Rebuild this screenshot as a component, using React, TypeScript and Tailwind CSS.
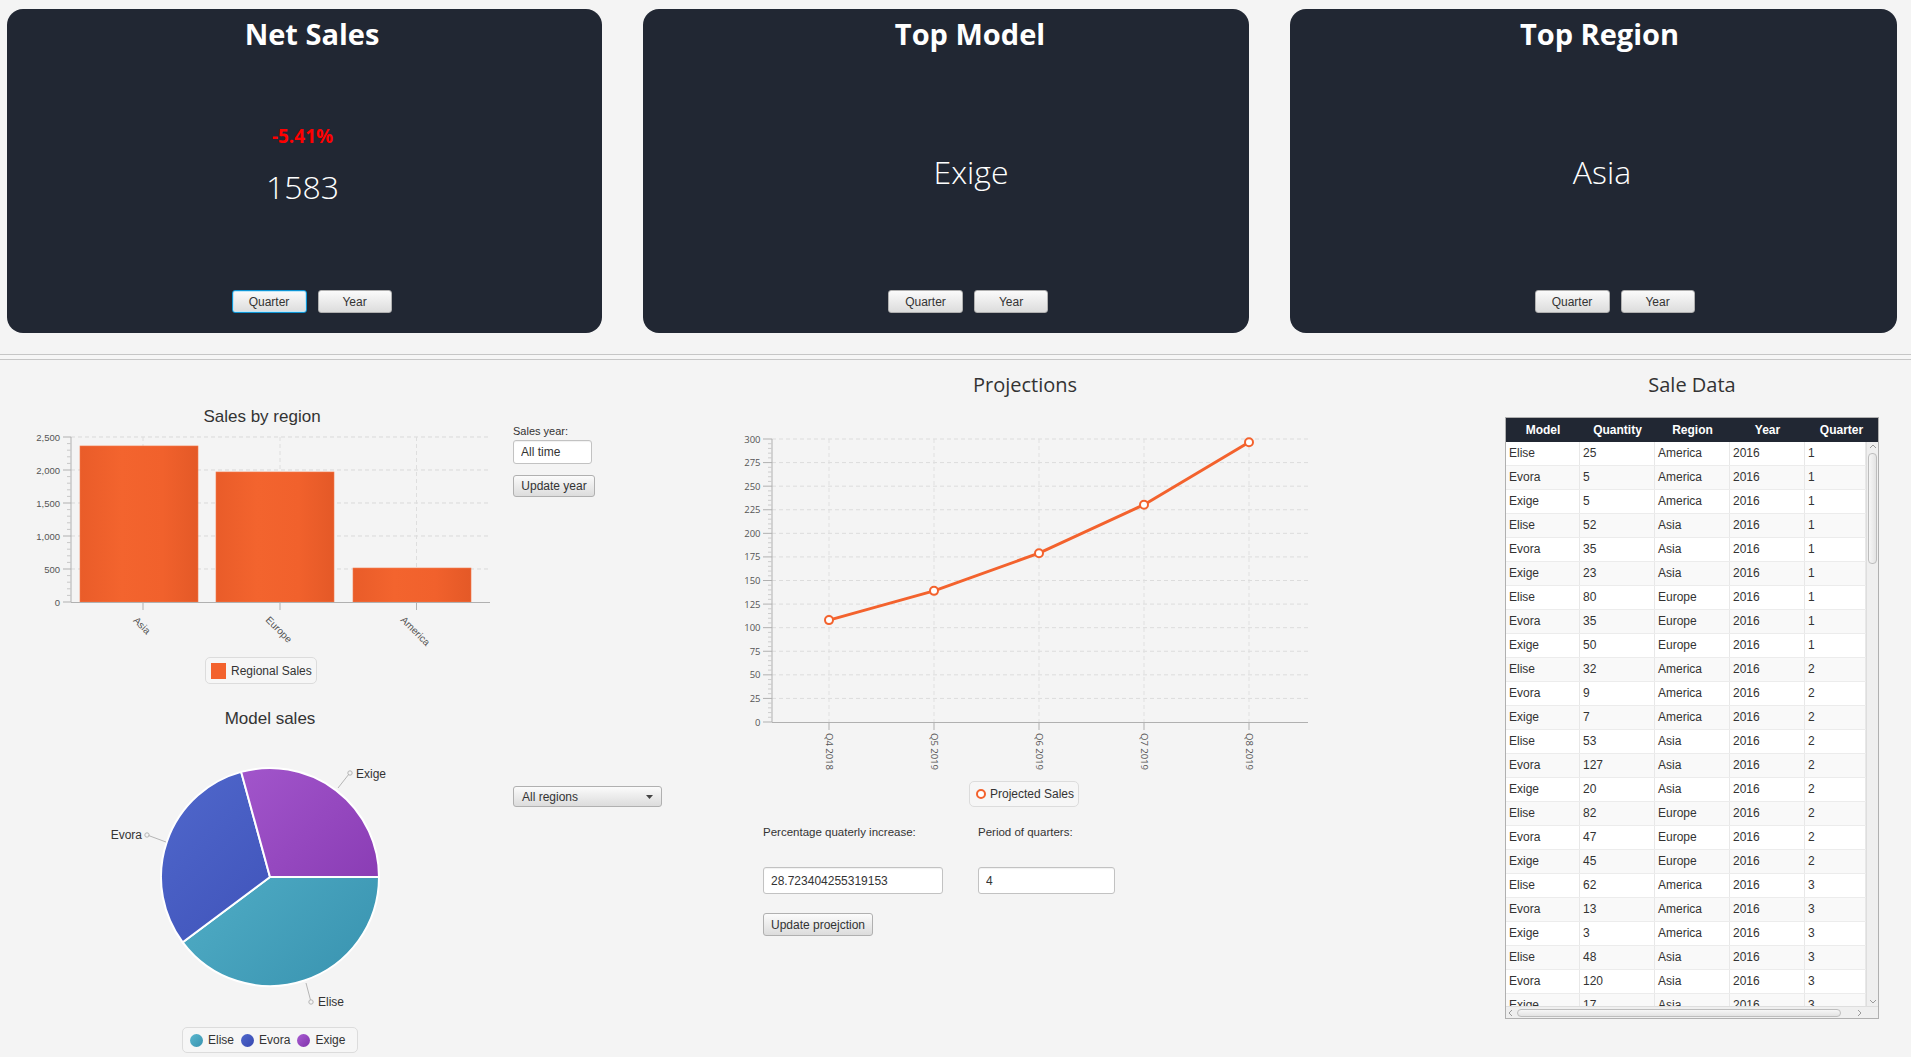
import React from "react";

const ARIAL = "font-['Liberation_Sans',Arial,sans-serif]";
const SEGOE = "font-['Open_Sans','Noto_Sans',sans-serif]";

const saleRows: [string, number, string, number, number][] = [
  ["Elise", 25, "America", 2016, 1],
  ["Evora", 5, "America", 2016, 1],
  ["Exige", 5, "America", 2016, 1],
  ["Elise", 52, "Asia", 2016, 1],
  ["Evora", 35, "Asia", 2016, 1],
  ["Exige", 23, "Asia", 2016, 1],
  ["Elise", 80, "Europe", 2016, 1],
  ["Evora", 35, "Europe", 2016, 1],
  ["Exige", 50, "Europe", 2016, 1],
  ["Elise", 32, "America", 2016, 2],
  ["Evora", 9, "America", 2016, 2],
  ["Exige", 7, "America", 2016, 2],
  ["Elise", 53, "Asia", 2016, 2],
  ["Evora", 127, "Asia", 2016, 2],
  ["Exige", 20, "Asia", 2016, 2],
  ["Elise", 82, "Europe", 2016, 2],
  ["Evora", 47, "Europe", 2016, 2],
  ["Exige", 45, "Europe", 2016, 2],
  ["Elise", 62, "America", 2016, 3],
  ["Evora", 13, "America", 2016, 3],
  ["Exige", 3, "America", 2016, 3],
  ["Elise", 48, "Asia", 2016, 3],
  ["Evora", 120, "Asia", 2016, 3],
  ["Exige", 17, "Asia", 2016, 3],
];

function FxButton({
  label,
  className = "",
  focused = false,
}: {
  label: string;
  className?: string;
  focused?: boolean;
}) {
  return (
    <button
      type="button"
      className={`flex items-center justify-center rounded-[3px] border bg-linear-to-b from-[#fbfbfb] to-[#dcdcdc] text-[12px] leading-none text-[#333] ${ARIAL} ${
        focused ? "border-[#0e95d5] shadow-[inset_0_0_0_1px_#bfe6f7]" : "border-[#b0b0b0]"
      } ${className}`}
    >
      {label}
    </button>
  );
}

function StatCard({
  title,
  titleClass,
  bodyClass,
  buttonsClass,
  focusQuarter = false,
  children,
}: {
  title: string;
  titleClass: string;
  bodyClass: string;
  buttonsClass: string;
  focusQuarter?: boolean;
  children: React.ReactNode;
}) {
  return (
    <div className={`flex h-[324px] flex-col rounded-[16px] bg-[#212733] pt-[6px] pb-[20px] ${SEGOE}`}>
      <h2 className={`text-center text-[29px] font-bold leading-[38px] text-white ${titleClass}`}>{title}</h2>
      <div className={`flex flex-1 flex-col items-center justify-center text-white ${bodyClass}`}>{children}</div>
      <div className={`flex justify-center gap-[11px] ${buttonsClass}`}>
        <FxButton label="Quarter" focused={focusQuarter} className="h-[23px] w-[75px]" />
        <FxButton label="Year" className="h-[23px] w-[74px]" />
      </div>
    </div>
  );
}

function BarChart() {
  const left = 71;
  const right = 490;
  const bottom = 174;
  const k = 0.066;
  const bars = [
    { label: "Asia", v: 2364, x: 80, c: 143, ly: 197.5 },
    { label: "Europe", v: 1970, x: 216, c: 280, ly: 201.5 },
    { label: "America", v: 515, x: 353, c: 416.5, ly: 203 },
  ];
  const ticks = [0, 500, 1000, 1500, 2000, 2500];
  const minors: number[] = [];
  for (let v = 0; v < 2500; v += 100) if (v % 500 !== 0) minors.push(v);

  return (
    <svg width={513} height={222} className="block">
      <defs>
        <linearGradient id="barFill" x1="0" x2="1" y1="0" y2="0">
          <stop offset="0" stopColor="#e95c29" />
          <stop offset="0.35" stopColor="#f3642e" />
          <stop offset="0.7" stopColor="#f1612c" />
          <stop offset="1" stopColor="#e45927" />
        </linearGradient>
      </defs>
      {ticks.slice(1).map((t) => (
        <line key={t} x1={left} x2={right} y1={bottom - t * k} y2={bottom - t * k} stroke="#d9d9d9" strokeDasharray="4 3" />
      ))}
      {bars.map((b) => (
        <line key={b.label} x1={b.c} x2={b.c} y1={9} y2={bottom} stroke="#dedede" strokeDasharray="4 3" />
      ))}
      {bars.map((b) => (
        <rect key={b.label} x={b.x} y={bottom - b.v * k} width={118} height={b.v * k} fill="url(#barFill)" stroke="#f47a4c" strokeWidth={0.6} />
      ))}
      <line x1={left} x2={left} y1={9} y2={bottom} stroke="#b0b0b0" />
      <line x1={left} x2={right} y1={bottom + 0.5} y2={bottom + 0.5} stroke="#b0b0b0" />
      {ticks.map((t) => (
        <g key={t}>
          <line x1={63} x2={left} y1={bottom - t * k} y2={bottom - t * k} stroke="#b0b0b0" />
          <text x={60} y={bottom - t * k} textAnchor="end" dominantBaseline="central" fontSize={9.5} fill="#555" fontFamily="Liberation Sans, Arial, sans-serif">
            {t.toLocaleString("en-US")}
          </text>
        </g>
      ))}
      {minors.map((t) => (
        <line key={t} x1={67} x2={left} y1={bottom - t * k} y2={bottom - t * k} stroke="#c8c8c8" />
      ))}
      {bars.map((b) => (
        <g key={b.label}>
          <line x1={b.c} x2={b.c} y1={bottom} y2={bottom + 8} stroke="#b0b0b0" />
          <text
            transform={`translate(${b.c - 1} ${b.ly}) rotate(45)`}
            textAnchor="middle"
            dominantBaseline="central"
            fontSize={10}
            fill="#555"
            fontFamily="Liberation Sans, Arial, sans-serif"
          >
            {b.label}
          </text>
        </g>
      ))}
    </svg>
  );
}

function PieChart() {
  return (
    <svg width={513} height={290} className="block">
      <defs>
        <linearGradient id="gElise" gradientUnits="userSpaceOnUse" x1="161" y1="38" x2="379" y2="256">
          <stop offset="0" stopColor="#5ab8cf" />
          <stop offset="1" stopColor="#3892af" />
        </linearGradient>
        <linearGradient id="gEvora" gradientUnits="userSpaceOnUse" x1="161" y1="38" x2="379" y2="256">
          <stop offset="0" stopColor="#5068cc" />
          <stop offset="1" stopColor="#3748b0" />
        </linearGradient>
        <linearGradient id="gExige" gradientUnits="userSpaceOnUse" x1="161" y1="38" x2="379" y2="256">
          <stop offset="0" stopColor="#a95dd2" />
          <stop offset="1" stopColor="#8032ab" />
        </linearGradient>
      </defs>
      <path d="M270 147 L379 147 A109 109 0 0 1 182.7 212.3 Z" fill="url(#gElise)" stroke="#ffffff" strokeWidth={2} />
      <path d="M270 147 L182.7 212.3 A109 109 0 0 1 241.2 41.9 Z" fill="url(#gEvora)" stroke="#ffffff" strokeWidth={2} />
      <path d="M270 147 L241.2 41.9 A109 109 0 0 1 379 147 Z" fill="url(#gExige)" stroke="#ffffff" strokeWidth={2} />
      <g stroke="#b5b5b5" fill="none">
        <line x1={338} y1={58} x2={349} y2={44} />
        <circle cx={350} cy={43} r={2.2} />
        <line x1={166} y1={112} x2={148.5} y2={105.5} />
        <circle cx={147} cy={105} r={2.2} />
        <line x1={306} y1={253} x2={310.5} y2={270} />
        <circle cx={311} cy={272} r={2.2} />
      </g>
      <g fontSize={12} fill="#333" fontFamily="Liberation Sans, Arial, sans-serif" dominantBaseline="central">
        <text x={356} y={44}>Exige</text>
        <text x={142} y={105} textAnchor="end">Evora</text>
        <text x={318} y={272}>Elise</text>
      </g>
    </svg>
  );
}

function LineChart() {
  const left = 72;
  const right = 608;
  const top = 41;
  const bottom = 324;
  const k = 283 / 300;
  const cats = [
    { l: "Q4 2018", x: 129, v: 108 },
    { l: "Q5 2019", x: 234, v: 139.02 },
    { l: "Q6 2019", x: 339, v: 178.95 },
    { l: "Q7 2019", x: 444, v: 230.35 },
    { l: "Q8 2019", x: 549, v: 296.5 },
  ];
  const ticks: number[] = [];
  for (let v = 0; v <= 300; v += 25) ticks.push(v);
  const minors: number[] = [];
  for (let v = 0; v < 300; v += 5) if (v % 25 !== 0) minors.push(v);
  const pts = cats.map((c) => `${c.x},${bottom - c.v * k}`).join(" ");

  return (
    <svg width={620} height={377} className="block">
      {ticks.slice(1).map((t) => (
        <line key={t} x1={left} x2={right} y1={bottom - t * k} y2={bottom - t * k} stroke="#dcdcdc" strokeDasharray="4 3" />
      ))}
      {cats.map((c) => (
        <line key={c.l} x1={c.x} x2={c.x} y1={top} y2={bottom} stroke="#e0e0e0" strokeDasharray="4 3" />
      ))}
      <line x1={left} x2={left} y1={top} y2={bottom} stroke="#b0b0b0" />
      <line x1={left} x2={right} y1={bottom + 0.5} y2={bottom + 0.5} stroke="#b0b0b0" />
      {minors.map((t) => (
        <line key={t} x1={68} x2={left} y1={bottom - t * k} y2={bottom - t * k} stroke="#cccccc" />
      ))}
      {ticks.map((t) => (
        <g key={t}>
          <line x1={63} x2={left} y1={bottom - t * k} y2={bottom - t * k} stroke="#b0b0b0" />
          <text x={60.5} y={bottom - t * k} textAnchor="end" dominantBaseline="central" fontSize={9.5} fill="#555" fontFamily="Open Sans, sans-serif">
            {t}
          </text>
        </g>
      ))}
      {cats.map((c) => (
        <g key={c.l}>
          <line x1={c.x} x2={c.x} y1={bottom} y2={bottom + 8} stroke="#b0b0b0" />
          <text transform={`translate(${c.x} 335) rotate(90)`} dominantBaseline="central" fontSize={9.5} fill="#555" fontFamily="Open Sans, sans-serif">
            {c.l}
          </text>
        </g>
      ))}
      <polyline points={pts} fill="none" stroke="#f3622d" strokeWidth={3} strokeLinejoin="round" />
      {cats.map((c) => (
        <circle key={c.l} cx={c.x} cy={bottom - c.v * k} r={4} fill="#ffffff" stroke="#f3622d" strokeWidth={2} />
      ))}
    </svg>
  );
}

function Chevron({ dir }: { dir: "up" | "down" | "left" | "right" }) {
  const d = {
    up: "M1 4 L4 1 L7 4",
    down: "M1 1 L4 4 L7 1",
    left: "M4 1 L1 4 L4 7",
    right: "M1 1 L4 4 L1 7",
  }[dir];
  const vertical = dir === "up" || dir === "down";
  return (
    <svg width={vertical ? 8 : 5} height={vertical ? 5 : 8} className="block">
      <path d={d} fill="none" stroke="#9a9a9a" strokeWidth={1} />
    </svg>
  );
}

function SaleTable() {
  const widths = ["w-[74px]", "w-[75px]", "w-[75px]", "w-[75px]", "w-[61px]"];
  const heads = ["Model", "Quantity", "Region", "Year", "Quarter"];
  return (
    <div className={`flex h-[602px] w-[374px] flex-col border border-[#b0b0b0] bg-white text-[12px] ${ARIAL}`}>
      <div className="flex h-[24px] shrink-0 bg-[#212733] font-bold text-white">
        {heads.map((h, i) => (
          <div key={h} className={`flex items-center justify-center ${i < 4 ? widths[i] : "flex-1"}`}>
            {h}
          </div>
        ))}
      </div>
      <div className="flex h-[564px] shrink-0">
        <div className="flex-1 overflow-hidden">
          {saleRows.map((r, idx) => (
            <div key={idx} className={`flex h-[24px] border-b border-[#ececec] text-[#333] ${idx % 2 === 1 ? "bg-[#f9f9f9]" : "bg-white"}`}>
              {r.map((cell, i) => (
                <div key={i} className={`${widths[i]} border-r border-[#e8e8e8] pl-[3px] leading-[23px]`}>
                  {cell}
                </div>
              ))}
            </div>
          ))}
        </div>
        <div className="flex w-[12px] flex-col items-center border-l border-[#dedede] bg-[#efefef]">
          <div className="mt-[2px]">
            <Chevron dir="up" />
          </div>
          <div className="mt-[4px] h-[111px] w-[9px] rounded-[4px] border border-[#bdbdbd] bg-linear-to-r from-[#f6f6f6] to-[#e3e3e3]" />
          <div className="flex-1" />
          <div className="mb-[2px]">
            <Chevron dir="down" />
          </div>
        </div>
      </div>
      <div className="flex h-[12px] shrink-0 border-t border-[#dedede] bg-[#efefef]">
        <div className="flex flex-1 items-center">
          <div className="ml-[2px]">
            <Chevron dir="left" />
          </div>
          <div className="ml-[4px] h-[8px] w-[324px] rounded-[4px] border border-[#bdbdbd] bg-linear-to-b from-[#f6f6f6] to-[#e3e3e3]" />
          <div className="ml-[16px]">
            <Chevron dir="right" />
          </div>
        </div>
        <div className="w-[12px] bg-[#efefef]" />
      </div>
    </div>
  );
}

function Legend({ className, children }: { className: string; children: React.ReactNode }) {
  return (
    <div className={`flex items-center rounded-[5px] border border-[#dcdcdc] bg-[#f6f6f6] text-[12px] text-[#333] ${ARIAL} ${className}`}>
      {children}
    </div>
  );
}

export default function App() {
  return (
    <div className="h-[1057px] w-[1911px] overflow-hidden bg-[#f4f4f4]">
      <div className="grid grid-cols-[595px_606px_607px] gap-x-[41px] pl-[7px] pt-[9px]">
        <StatCard title="Net Sales" titleClass="pl-[15px]" bodyClass="pb-[12px] pr-[4px]" buttonsClass="pl-[14px]" focusQuarter>
          <span className="text-[19px] font-bold leading-[26px] text-[#ff0000]">-5.41%</span>
          <span className="mt-[16px] text-[32px] font-light leading-[44px]">1583</span>
        </StatCard>
        <StatCard title="Top Model" titleClass="pl-[48px]" bodyClass="pl-[50px]" buttonsClass="pl-[44px]">
          <span className="text-[32px] font-light leading-[44px]">Exige</span>
        </StatCard>
        <StatCard title="Top Region" titleClass="pl-[12px]" bodyClass="pl-[17px]" buttonsClass="pl-[42px]">
          <span className="text-[32px] font-light leading-[44px]">Asia</span>
        </StatCard>
      </div>

      <div className="mt-[21px] h-[6px] border-y border-[#c6c6c6] bg-[#f6f6f6]" />

      <div className="flex">
        {/* charts on the left */}
        <div className="flex w-[513px] flex-col">
          <h3 className={`mt-[45px] h-[23px] pl-[11px] text-center text-[17px] leading-[23px] text-[#333] ${ARIAL}`}>Sales by region</h3>
          <BarChart />
          <Legend className="ml-[205px] mt-[7px] h-[27px] w-[112px] pl-[5px]">
            <span className="h-[16px] w-[15px] bg-[#f3622d]" />
            <span className="ml-[5px]">Regional Sales</span>
          </Legend>
          <h3 className={`mt-[23px] h-[23px] pl-[27px] text-center text-[17px] leading-[23px] text-[#333] ${ARIAL}`}>Model sales</h3>
          <PieChart />
          <Legend className="ml-[182px] mt-[7px] h-[26px] w-[176px] pl-[7px]">
            <span className="h-[13px] w-[13px] rounded-full bg-linear-to-br from-[#5ab8cf] to-[#3892af]" />
            <span className="ml-[5px]">Elise</span>
            <span className="ml-[7px] h-[13px] w-[13px] rounded-full bg-linear-to-br from-[#5068cc] to-[#3748b0]" />
            <span className="ml-[5px]">Evora</span>
            <span className="ml-[7px] h-[13px] w-[13px] rounded-full bg-linear-to-br from-[#a95dd2] to-[#8032ab]" />
            <span className="ml-[5px]">Exige</span>
          </Legend>
        </div>

        {/* filters */}
        <div className={`flex w-[187px] flex-col items-start pt-[64px] text-[#333] ${ARIAL}`}>
          <label className="h-[15px] text-[11px] leading-[15px]">Sales year:</label>
          <input
            readOnly
            defaultValue="All time"
            className="mt-[1px] h-[24px] w-[79px] rounded-[3px] border border-[#c2c2c2] bg-white px-[7px] text-[12px] text-[#333] shadow-[inset_0_1px_1px_rgba(0,0,0,0.06)] outline-none"
          />
          <FxButton label="Update year" className="mt-[11px] h-[22px] w-[82px]" />
          <div className="mt-[289px] flex h-[21px] w-[149px] items-center justify-between rounded-[3px] border border-[#b0b0b0] bg-linear-to-b from-[#fbfbfb] to-[#dcdcdc] pl-[8px] pr-[8px] text-[12px]">
            <span>All regions</span>
            <svg width={7} height={4} className="block">
              <path d="M0 0 H7 L3.5 4 Z" fill="#444" />
            </svg>
          </div>
        </div>

        {/* projections */}
        <div className="flex w-[620px] flex-col">
          <h3 className={`mt-[11px] h-[27px] pl-[30px] text-center text-[20px] leading-[27px] text-[#333] ${SEGOE}`}>Projections</h3>
          <LineChart />
          <Legend className="ml-[269px] mt-[6px] h-[26px] w-[110px] pl-[6px]">
            <span className="h-[10px] w-[10px] rounded-full border-[2px] border-[#f3622d] bg-white" />
            <span className="ml-[4px]">Projected Sales</span>
          </Legend>
          <div className={`mt-[18px] flex h-[15px] pl-[63px] text-[11.5px] leading-[15px] text-[#333] ${ARIAL}`}>
            <span className="w-[215px]">Percentage quaterly increase:</span>
            <span>Period of quarters:</span>
          </div>
          <div className="mt-[27px] flex pl-[63px]">
            <input
              readOnly
              defaultValue="28.723404255319153"
              className={`h-[27px] w-[180px] rounded-[3px] border border-[#c2c2c2] bg-white px-[7px] text-[12px] text-[#333] shadow-[inset_0_1px_1px_rgba(0,0,0,0.06)] outline-none ${ARIAL}`}
            />
            <input
              readOnly
              defaultValue="4"
              className={`ml-[35px] h-[27px] w-[137px] rounded-[3px] border border-[#c2c2c2] bg-white px-[7px] text-[12px] text-[#333] shadow-[inset_0_1px_1px_rgba(0,0,0,0.06)] outline-none ${ARIAL}`}
            />
          </div>
          <FxButton label="Update proejction" className="ml-[63px] mt-[19px] h-[23px] w-[110px]" />
        </div>

        {/* table */}
        <div className="flex flex-1 flex-col pl-[185px]">
          <h3 className={`mt-[11px] h-[27px] w-[374px] text-center text-[20px] leading-[27px] text-[#333] ${SEGOE}`}>Sale Data</h3>
          <div className="mt-[19px]">
            <SaleTable />
          </div>
        </div>
      </div>
    </div>
  );
}
